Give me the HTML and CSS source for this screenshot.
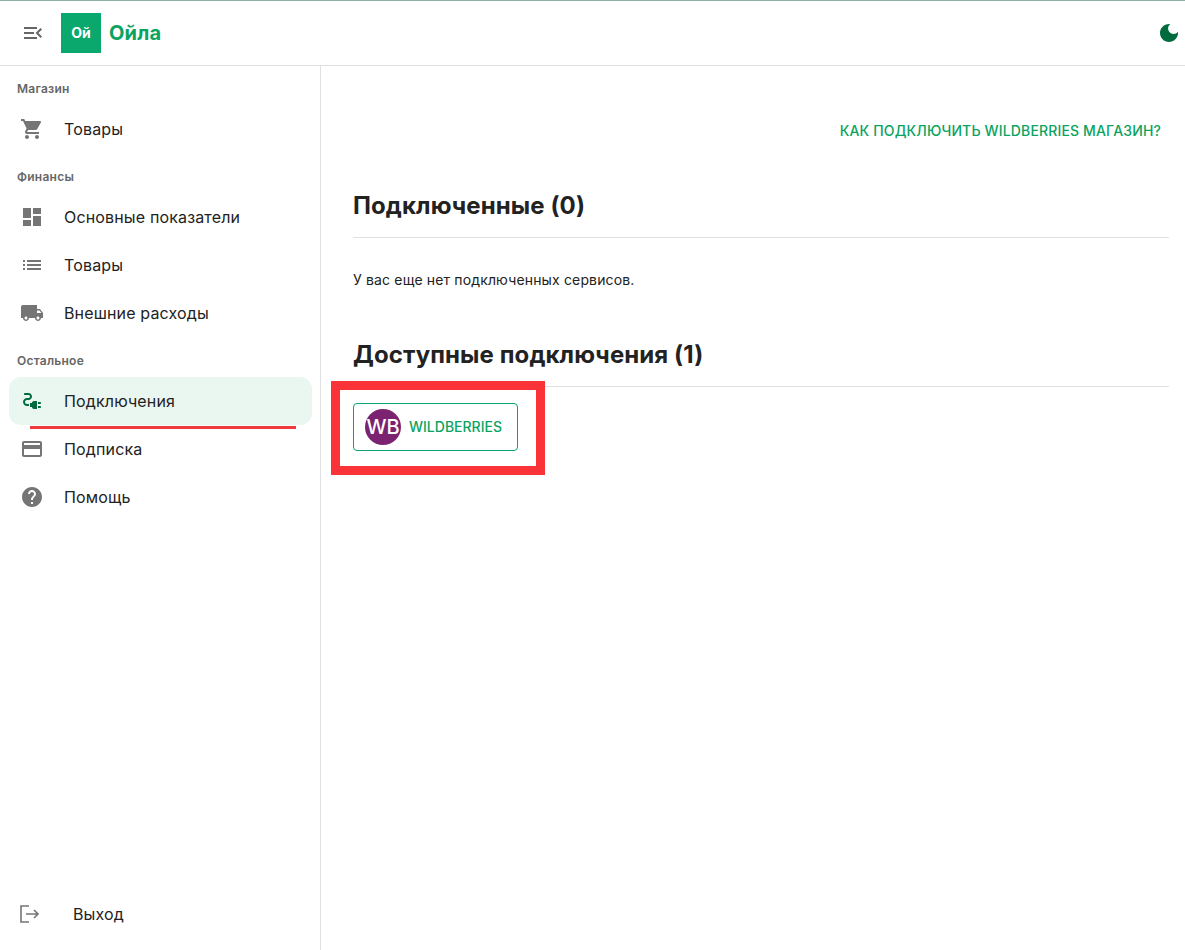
FILE: index.html
```
<!DOCTYPE html>
<html lang="ru">
<head>
<meta charset="utf-8">
<title>Ойла</title>
<link rel="stylesheet" href="styles.css">
</head>
<body>
<header class="topbar">
  <svg class="menu-icon" viewBox="0 0 24 24"><path d="M3 18h13v-2H3v2zm0-5h10v-2H3v2zm0-7v2h13V6H3zm18 9.59L17.42 12 21 8.41 19.59 7l-5 5 5 5L21 15.59z"/></svg>
  <div class="logo-box"><span class="logo-mark">Ой</span></div>
  <div class="logo-name">Ойла</div>
  <svg class="moon" viewBox="0 0 24 24"><path d="M12 3c-4.97 0-9 4.03-9 9s4.03 9 9 9 9-4.03 9-9c0-.46-.04-.92-.1-1.36-.98 1.37-2.58 2.26-4.4 2.26-2.98 0-5.4-2.42-5.4-5.4 0-1.81.89-3.42 2.26-4.4-.44-.06-.9-.1-1.36-.1z"/></svg>
</header>
<div class="shell">
  <aside class="sidebar">
    <nav class="nav">
      <div class="nav-label">Магазин</div>
      <a class="nav-item"><svg class="nav-icon" viewBox="0 0 24 24"><path d="M7 18c-1.1 0-1.99.9-1.99 2S5.9 22 7 22s2-.9 2-2-.9-2-2-2zM1 2v2h2l3.6 7.59-1.35 2.45c-.16.28-.25.61-.25.96 0 1.1.9 2 2 2h12v-2H7.42c-.14 0-.25-.11-.25-.25l.03-.12.9-1.63h7.45c.75 0 1.41-.41 1.75-1.03l3.58-6.49c.08-.14.12-.31.12-.48 0-.55-.45-1-1-1H5.21l-.94-2H1zm16 16c-1.1 0-1.99.9-1.99 2s.89 2 1.99 2 2-.9 2-2-.9-2-2-2z"/></svg><span>Товары</span></a>
      <div class="nav-label spaced">Финансы</div>
      <a class="nav-item"><svg class="nav-icon" viewBox="0 0 24 24"><path d="M3 13h8V3H3v10zm0 8h8v-6H3v6zm10 0h8V11h-8v10zm0-18v6h8V3h-8z"/></svg><span>Основные показатели</span></a>
      <a class="nav-item"><svg class="nav-icon" viewBox="0 0 24 24"><path d="M3 13h2v-2H3v2zm0 4h2v-2H3v2zm0-8h2V7H3v2zm4 4h14v-2H7v2zm0 4h14v-2H7v2zM7 7v2h14V7H7z"/></svg><span>Товары</span></a>
      <a class="nav-item"><svg class="nav-icon" viewBox="0 0 24 24"><path d="M20 8h-3V4H3c-1.1 0-2 .9-2 2v11h2c0 1.66 1.34 3 3 3s3-1.34 3-3h6c0 1.66 1.34 3 3 3s3-1.34 3-3h2v-5l-3-4zM6 18.5c-.83 0-1.5-.67-1.5-1.5s.67-1.5 1.5-1.5 1.5.67 1.5 1.5-.67 1.5-1.5 1.5zm13.5-9l1.96 2.5H17V9.5h2.5zm-1.5 9c-.83 0-1.5-.67-1.5-1.5s.67-1.5 1.5-1.5 1.5.67 1.5 1.5-.67 1.5-1.5 1.5z"/></svg><span>Внешние расходы</span></a>
      <div class="nav-label spaced">Остальное</div>
      <a class="nav-item active"><svg class="nav-icon" viewBox="0 0 24 24"><path d="M21 14c0-.55-.45-1-1-1h-2v2h2c.55 0 1-.45 1-1zm-1 3h-2v2h2c.55 0 1-.45 1-1s-.45-1-1-1zm-8-3h-2v4h2c0 1.1.9 2 2 2h3v-8h-3c-1.1 0-2 .9-2 2z"/><path d="M5 13c0-1.1.9-2 2-2h1.5c1.93 0 3.5-1.57 3.5-3.5S10.43 4 8.5 4H5c-.55 0-1 .45-1 1s.45 1 1 1h3.5c.83 0 1.5.67 1.5 1.5S9.33 9 8.5 9H7c-2.21 0-4 1.79-4 4s1.79 4 4 4h2v-2H7c-1.1 0-2-.9-2-2z"/></svg><span>Подключения</span></a>
      <a class="nav-item"><svg class="nav-icon" viewBox="0 0 24 24"><path d="M20 4H4c-1.11 0-1.99.89-1.99 2L2 18c0 1.11.89 2 2 2h16c1.11 0 2-.89 2-2V6c0-1.11-.89-2-2-2zm0 14H4v-6h16v6zm0-10H4V6h16v2z"/></svg><span>Подписка</span></a>
      <a class="nav-item"><svg class="nav-icon" viewBox="0 0 24 24"><path d="M12 2C6.48 2 2 6.48 2 12s4.48 10 10 10 10-4.48 10-10S17.52 2 12 2zm1 17h-2v-2h2v2zm2.07-7.75l-.9.92C13.45 12.9 13 13.5 13 15h-2v-.5c0-1.1.45-2.1 1.17-2.83l1.24-1.26c.37-.36.59-.86.59-1.41 0-1.1-.9-2-2-2s-2 .9-2 2H8c0-2.21 1.79-4 4-4s4 1.79 4 4c0 .88-.36 1.68-.93 2.25z"/></svg><span>Помощь</span></a>
    </nav>
    <a class="logout">
      <svg class="logout-icon" viewBox="0 0 20 18"><path d="M9 1H1v16h8M6 9h12M14 5l4 4-4 4"/></svg>
      <span>Выход</span>
    </a>
  </aside>
  <main class="main">
    <div class="help-row"><a class="help-link">Как подключить Wildberries магазин?</a></div>
    <h2 class="section-title">Подключенные (0)</h2>
    <p class="empty">У вас еще нет подключенных сервисов.</p>
    <h2 class="section-title second">Доступные подключения (1)</h2>
    <button class="service"><span class="service-logo">WB</span><span class="service-name">Wildberries</span></button>
  </main>
</div>
<div class="mark-line"></div>
<div class="mark-box"></div>
</body>
</html>
```
FILE: styles.css
```
* { box-sizing: border-box; }
html, body { margin: 0; height: 100%; }
body {
  position: relative;
  height: 950px;
  overflow: hidden;
  background: #fff;
  color: #222;
  font-family: Inter, "Liberation Sans", sans-serif;
  display: flex;
  flex-direction: column;
}
.topbar {
  height: 66px;
  flex: none;
  display: flex;
  align-items: center;
  padding: 0 4px 0 21px;
  border-top: 1px solid #8fb0a6;
  border-bottom: 1px solid #e0e0e0;
}
.menu-icon { width: 24px; height: 24px; fill: #666; flex: none; margin-right: 16px; }
.logo-box {
  width: 40px;
  height: 40px;
  background: #0aa86c;
  color: #fff;
  font-size: 14px;
  font-weight: 700;
  display: flex;
  align-items: center;
  justify-content: center;
}
.logo-mark { margin-bottom: 2px; }
.logo-name { margin-left: 8px; color: #0aa35f; font-size: 20px; font-weight: 700; letter-spacing: 0.15px; }
.moon { width: 24px; height: 24px; fill: #006b3c; margin-left: auto; }
.shell { flex: 1; display: flex; min-height: 0; }
.sidebar {
  width: 321px;
  flex: none;
  border-right: 1px solid #e0e0e0;
  display: flex;
  flex-direction: column;
  justify-content: space-between;
  padding: 5px 8px 12px 9px;
}
.nav { display: flex; flex-direction: column; }
.nav-label {
  height: 34px;
  line-height: 35px;
  padding-left: 8px;
  font-size: 12px;
  font-weight: 600;
  letter-spacing: 0.25px;
  color: #666;
}
.nav-label.spaced { margin-top: 6px; }
.nav-item {
  height: 48px;
  display: flex;
  align-items: center;
  padding-left: 11px;
  border-radius: 12px;
  font-size: 16px;
  letter-spacing: 0.15px;
  color: #222;
}
.nav-item.active { background: #eaf6f0; }
.nav-item.active .nav-icon { fill: #006b3c; }
.nav-icon { width: 24px; height: 24px; fill: #757575; margin-right: 20px; flex: none; }
.logout {
  height: 48px;
  display: flex;
  align-items: center;
  padding-left: 11px;
  font-size: 16px;
  letter-spacing: 0.15px;
  color: #222;
}
.logout-icon {
  width: 20px;
  height: 18px;
  fill: none;
  stroke: #757575;
  stroke-width: 1.6;
  margin-right: 33px;
  flex: none;
}
.main { flex: 1; min-width: 0; padding: 0 16px 0 32px; }
.help-row { height: 66px; margin-right: 8px; padding-top: 56px; display: flex; justify-content: flex-end; line-height: 18px; }
.help-link { color: #0aa35f; font-size: 14px; font-weight: 500; letter-spacing: 0.15px; text-transform: uppercase; white-space: nowrap; }
.section-title {
  margin: 41px 0 0;
  height: 65px;
  padding-top: 4px;
  line-height: 58px;
  font-size: 24px;
  font-weight: 700;
  letter-spacing: 0.1px;
  color: #222;
  border-bottom: 1px solid #e0e0e0;
}
.empty { margin: 32px 0 0; font-size: 14px; line-height: 20px; letter-spacing: 0.15px; }
.section-title.second { margin-top: 32px; }
.service {
  margin-top: 16px;
  width: 165px;
  height: 48px;
  display: flex;
  align-items: center;
  gap: 8px;
  padding: 0 11px;
  background: #fff;
  border: 1px solid #0aa36a;
  border-radius: 4px;
  color: #0aa35f;
  font-family: inherit;
  font-size: 14px;
  font-weight: 500;
  text-transform: uppercase;
}
.service-name { margin-bottom: 2px; }
.service-logo {
  width: 36px;
  height: 36px;
  flex: none;
  border-radius: 50%;
  background: #7b2270;
  color: #fff;
  font-size: 20px;
  font-weight: 500;
  display: flex;
  align-items: center;
  justify-content: center;
}
.mark-line {
  position: absolute;
  left: 30px;
  top: 426px;
  width: 266px;
  height: 3px;
  background: #f03a3d;
}
.mark-box {
  position: absolute;
  left: 331px;
  top: 381px;
  width: 214px;
  height: 94px;
  border: 9px solid #f93338;
}
```
